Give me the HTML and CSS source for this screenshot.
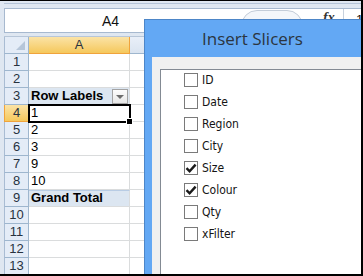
FILE: index.html
```html
<!DOCTYPE html>
<html>

<head>
    <title>Insert Slicers</title>
    <meta name="viewport" content="width=device-width, initial-scale=1">
    <link rel="stylesheet" href="styles.css">
</head>

<body>
    <div class="window">
        <div class="ribbon-edge"></div>
        <div class="formula-bar">
            <div class="name-box">A4</div>
            <div class="fx-grip"></div>
            <div class="fx">fx</div>
            <div class="formula-input">1</div>
        </div>
        <div class="bar-gap"></div>

        <div class="sheet">
            <div class="row head-row">
                <div class="rh corner"></div>
                <div class="ch selected">A</div>
                <div class="ch"></div>
            </div>
            <div class="row">
                <div class="rh">1</div>
                <div class="cell"></div>
                <div class="cell"></div>
            </div>
            <div class="row">
                <div class="rh">2</div>
                <div class="cell"></div>
                <div class="cell"></div>
            </div>
            <div class="row">
                <div class="rh">3</div>
                <div class="cell pivot-head"><b>Row Labels</b><span class="filter-btn"></span></div>
                <div class="cell"></div>
            </div>
            <div class="row">
                <div class="rh selected">4</div>
                <div class="cell active">1<span class="fill-handle"></span></div>
                <div class="cell"></div>
            </div>
            <div class="row">
                <div class="rh">5</div>
                <div class="cell">2</div>
                <div class="cell"></div>
            </div>
            <div class="row">
                <div class="rh">6</div>
                <div class="cell">3</div>
                <div class="cell"></div>
            </div>
            <div class="row">
                <div class="rh">7</div>
                <div class="cell">9</div>
                <div class="cell"></div>
            </div>
            <div class="row">
                <div class="rh">8</div>
                <div class="cell">10</div>
                <div class="cell"></div>
            </div>
            <div class="row">
                <div class="rh">9</div>
                <div class="cell pivot-total"><b>Grand Total</b></div>
                <div class="cell"></div>
            </div>
            <div class="row">
                <div class="rh">10</div>
                <div class="cell"></div>
                <div class="cell"></div>
            </div>
            <div class="row">
                <div class="rh">11</div>
                <div class="cell"></div>
                <div class="cell"></div>
            </div>
            <div class="row">
                <div class="rh">12</div>
                <div class="cell"></div>
                <div class="cell"></div>
            </div>
            <div class="row">
                <div class="rh">13</div>
                <div class="cell"></div>
                <div class="cell"></div>
            </div>
        </div>

        <div class="dialog">
            <div class="dialog-title">Insert Slicers</div>
            <div class="dialog-body">
                <div class="field-list">
                    <label class="field"><span class="box"></span>ID</label>
                    <label class="field"><span class="box"></span>Date</label>
                    <label class="field"><span class="box"></span>Region</label>
                    <label class="field"><span class="box"></span>City</label>
                    <label class="field"><span class="box checked"><svg width="12" height="12" viewBox="0 0 12 12"><path d="M1.5 6.2 L4.6 9.3 L10.6 2.6" fill="none" stroke="#1a1a1a" stroke-width="2.4"/></svg></span>Size</label>
                    <label class="field"><span class="box checked"><svg width="12" height="12" viewBox="0 0 12 12"><path d="M1.5 6.2 L4.6 9.3 L10.6 2.6" fill="none" stroke="#1a1a1a" stroke-width="2.4"/></svg></span>Colour</label>
                    <label class="field"><span class="box"></span>Qty</label>
                    <label class="field"><span class="box"></span>xFilter</label>
                </div>
            </div>
        </div>
    </div>
</body>

</html>
```

FILE: styles.css
```css
body {
    margin: 0;
    padding: 0;
    font-family: "Liberation Sans", Arial, sans-serif;
}

.window {
    position: relative;
    width: 363px;
    height: 276px;
    box-sizing: border-box;
    overflow: hidden;
    border-top: 1px solid #000;
    border-right: 2px solid #000;
    border-bottom: 2px solid #000;
    padding-left: 4px;
    background-color: #dfe7f1;
}

.ribbon-edge {
    height: 2px;
    border-bottom: 1px solid #b5c4d7;
    margin-bottom: 4px;
}

.formula-bar {
    position: relative;
    height: 23px;
    background-color: #fff;
    border: 1px solid #a7b9cf;
    border-right: none;
}

.name-box {
    position: absolute;
    left: 97px;
    top: 4px;
    font-size: 14px;
    color: #111;
}

.fx-grip {
    position: absolute;
    left: 236px;
    top: 1px;
    width: 60px;
    height: 30px;
    border: 1px solid #c3ccd8;
    border-radius: 16px;
    background-color: #f3f6fa;
}

.fx {
    position: absolute;
    left: 318px;
    top: 1px;
    font-family: "Liberation Serif", serif;
    font-style: italic;
    font-weight: bold;
    font-size: 14px;
    color: #333;
}

.formula-input {
    position: absolute;
    left: 338px;
    top: 0;
    bottom: 0;
    padding-left: 12px;
    border-left: 1px solid #c7d1dd;
    font-size: 13px;
    line-height: 22px;
    color: #111;
}

.bar-gap {
    height: 3px;
    border-bottom: 1px solid #b7c6d8;
}

.sheet {
    background-color: #fff;
}

.row {
    display: grid;
    grid-template-columns: 25px 101px 1fr;
    height: 17px;
}

.rh {
    box-sizing: border-box;
    border-left: 1px solid #a9bcd3;
    border-right: 1px solid #9eb6ce;
    border-bottom: 1px solid #9eb6ce;
    background-color: #e4ecf7;
    font-size: 13px;
    line-height: 16px;
    text-align: center;
    color: #27323f;
}

.rh.selected,
.ch.selected {
    background: linear-gradient(#fbe3a6, #f5c85c);
    border-color: #f0a33b;
}

.corner {
    position: relative;
}

.corner::after {
    content: "";
    position: absolute;
    right: 3px;
    bottom: 3px;
    border-left: 9px solid transparent;
    border-bottom: 9px solid #b6c6d9;
}

.ch {
    box-sizing: border-box;
    border-right: 1px solid #9eb6ce;
    border-bottom: 1px solid #9eb6ce;
    background: linear-gradient(#e9eff8, #dae4f0);
    font-size: 13px;
    line-height: 16px;
    text-align: center;
    color: #27323f;
}

.cell {
    position: relative;
    box-sizing: border-box;
    border-right: 1px solid #dadcdd;
    border-bottom: 1px solid #dadcdd;
    padding-left: 2px;
    font-size: 13px;
    line-height: 16px;
    color: #000;
}

.pivot-head,
.pivot-total {
    background-color: #dce6f1;
}

.pivot-total {
    border-top: 1px solid #b8cce4;
    line-height: 14px;
}

.filter-btn {
    position: absolute;
    right: 1px;
    top: 1px;
    width: 14px;
    height: 13px;
    border: 1px solid #a3a3a3;
    background: linear-gradient(#fdfdfd, #e6e6e6);
}

.filter-btn::after {
    content: "";
    position: absolute;
    left: 3px;
    top: 5px;
    border-left: 4px solid transparent;
    border-right: 4px solid transparent;
    border-top: 4px solid #6d6d6d;
}

.active {
    outline: 2px solid #000;
    outline-offset: -1px;
    z-index: 1;
}

.fill-handle {
    position: absolute;
    right: -4px;
    bottom: -4px;
    width: 5px;
    height: 5px;
    background-color: #000;
    border: 1px solid #fff;
}

/* dialog window */

.dialog {
    position: absolute;
    left: 144px;
    top: 18px;
    right: -20px;
    bottom: -20px;
    display: flex;
    flex-direction: column;
    background-color: #63a8f4;
    border: 1px solid #4d86c8;
    z-index: 2;
}

.dialog-title {
    height: 37px;
    padding-left: 57px;
    font-family: "Open Sans", sans-serif;
    font-size: 17px;
    line-height: 37px;
    color: #2b3540;
}

.dialog-body {
    flex-grow: 1;
    display: flex;
    margin-left: 7px;
    padding: 12px 0 0 8px;
    background-color: #f0f0f0;
}

.field-list {
    flex-grow: 1;
    padding-left: 23px;
    background-color: #fff;
    border: 1px solid #838a93;
}

.field {
    display: flex;
    align-items: center;
    gap: 4px;
    height: 22px;
    margin-top: -1px;
    margin-bottom: 1px;
    font-family: "DejaVu Sans Condensed", "DejaVu Sans", sans-serif;
    font-size: 12px;
    color: #141414;
}

.box {
    display: flex;
    align-items: center;
    justify-content: center;
    width: 12px;
    height: 12px;
    border: 1px solid #7a7a7a;
    background-color: #fff;
}
```
